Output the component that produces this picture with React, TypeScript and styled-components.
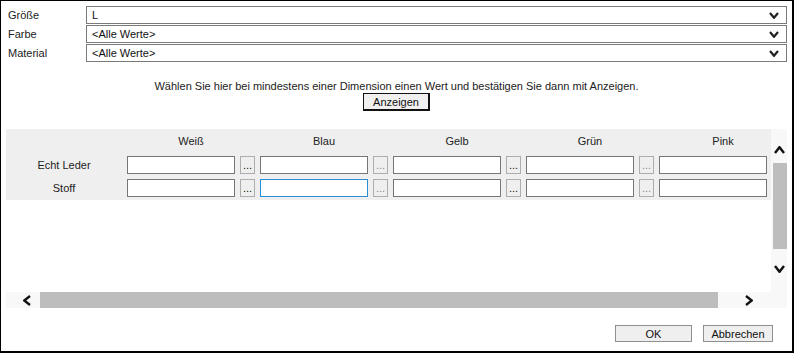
import React from "react";
import styled, { createGlobalStyle } from "styled-components";

const GlobalStyle = createGlobalStyle`
  html, body { margin: 0; padding: 0; background: #fff; }
  body { font-family: "Liberation Sans", Arial, sans-serif; font-size: 11px; color: #222; }
  * { box-sizing: border-box; }
`;

const Frame = styled.div`
  width: 794px;
  height: 353px;
  border-style: solid;
  border-color: #000;
  border-width: 1px 2px 2px 1px;
  padding: 5px 5px 0 5px;
  display: flex;
  flex-direction: column;
  background: #fff;
`;

const FilterGrid = styled.div`
  display: grid;
  grid-template-columns: 80px 1fr;
  row-gap: 1px;
`;

const FilterLabel = styled.div`
  height: 18px;
  line-height: 18px;
  padding-left: 2px;
  color: #222;
`;

const SelectBox = styled.div`
  height: 18px;
  border: 1px solid #7a7a7a;
  display: flex;
  align-items: center;
  justify-content: space-between;
  padding: 0 7px 0 5px;
  background: #fff;
  color: #111;
`;

const Hint = styled.div`
  display: flex;
  flex-direction: column;
  align-items: center;
  margin-top: 18px;
`;

const HintText = styled.div`
  line-height: 13px;
  color: #222;
`;

const ShowButton = styled.button`
  height: 18px;
  padding: 0 9px;
  font-family: inherit;
  font-size: 11px;
  color: #111;
  background: #f0f0f0;
  border-style: solid;
  border-color: #111;
  border-width: 1px 2px 2px 1px;
`;

const ScrollArea = styled.div`
  margin-top: 18px;
  height: 179px;
  display: grid;
  grid-template-columns: 1fr 16px;
  grid-template-rows: 163px 16px;
`;

const Viewport = styled.div`
  overflow: hidden;
  background: #fff;
`;

const Table = styled.div`
  display: grid;
  grid-template-columns: 116px repeat(5, 133px);
  grid-template-rows: 24px 23px 23px;
  align-items: center;
  width: max-content;
  background: #efefef;
  padding-bottom: 1px;
`;

const ColHeader = styled.div`
  padding-left: 5px;
  width: 128px;
  box-sizing: content-box;
  text-align: center;
  color: #222;
`;

const RowLabel = styled.div`
  text-align: center;
  color: #222;
`;

const Cell = styled.div`
  display: flex;
  align-items: center;
  gap: 5px;
  padding-left: 5px;
`;

const ValueInput = styled.div<{ $focused?: boolean }>`
  width: 108px;
  height: 18px;
  background: #fff;
  border: 1px solid ${(p) => (p.$focused ? "#2a8fd6" : "#767676")};
`;

const DotsButton = styled.div<{ $muted?: boolean }>`
  width: 15px;
  height: 18px;
  border: 1px solid #adadad;
  background: #efefef;
  color: ${(p) => (p.$muted ? "#8a8a8a" : "#111")};
  font-size: 11px;
  display: flex;
  justify-content: center;
  align-items: flex-end;
  line-height: 13px;
  padding-bottom: 1px;
`;

const VBar = styled.div`
  background: #f8f8f8;
  display: flex;
  flex-direction: column;
`;

const ArrowBox = styled.div<{ $h?: number; $w?: number; $pt?: number; $pl?: number }>`
  display: flex;
  flex: ${(p) => (p.$h || p.$w ? "0 0 auto" : "1 1 auto")};
  ${(p) => (p.$h ? `height: ${p.$h}px;` : "")}
  ${(p) => (p.$w ? `width: ${p.$w}px;` : "")}
  padding-top: ${(p) => p.$pt ?? 0}px;
  padding-left: ${(p) => p.$pl ?? 0}px;
  justify-content: ${(p) => (p.$pl !== undefined ? "flex-start" : "center")};
  align-items: ${(p) => (p.$pt !== undefined ? "flex-start" : "center")};
`;

const VThumb = styled.div`
  height: 86px;
  margin-left: 2px;
  background: #bdbdbd;
`;

const HBar = styled.div`
  grid-column: 1 / -1;
  background: #f8f8f8;
  display: flex;
`;

const HThumb = styled.div`
  width: 678px;
  background: #bdbdbd;
`;

const Footer = styled.div`
  display: flex;
  justify-content: flex-end;
  gap: 11px;
  margin-top: 17px;
  padding-right: 14px;
`;

const DialogButton = styled.button<{ $width: number }>`
  width: ${(p) => p.$width}px;
  height: 17px;
  padding: 0;
  font-family: inherit;
  font-size: 11px;
  color: #111;
  background: #efefef;
  border: 1px solid #8f8f8f;
`;

type Dir = "up" | "down" | "left" | "right";

const Chevron: React.FC<{ dir: Dir; size?: number; color?: string; sw?: number }> = ({
  dir,
  size = 9,
  color = "#111",
  sw = 2.4,
}) => {
  const vertical = dir === "up" || dir === "down";
  const w = vertical ? size : Math.round(size * 0.7);
  const h = vertical ? Math.round(size * 0.7) : size;
  let d = "";
  if (dir === "down") d = `M1 1 L${w / 2} ${h - 1.2} L${w - 1} 1`;
  if (dir === "up") d = `M1 ${h - 1} L${w / 2} 1.2 L${w - 1} ${h - 1}`;
  if (dir === "left") d = `M${w - 1} 1 L1.2 ${h / 2} L${w - 1} ${h - 1}`;
  if (dir === "right") d = `M1 1 L${w - 1.2} ${h / 2} L1 ${h - 1}`;
  return (
    <svg width={w} height={h} viewBox={`0 0 ${w} ${h}`} style={{ display: "block" }}>
      <path d={d} fill="none" stroke={color} strokeWidth={sw} strokeLinecap="butt" strokeLinejoin="miter" />
    </svg>
  );
};

const filters = [
  { label: "Größe", value: "L" },
  { label: "Farbe", value: "<Alle Werte>" },
  { label: "Material", value: "<Alle Werte>" },
];

const colors = ["Weiß", "Blau", "Gelb", "Grün", "Pink"];
const materials = ["Echt Leder", "Stoff"];

export default function App() {
  return (
    <>
      <GlobalStyle />
      <Frame>
        <FilterGrid>
          {filters.map((f) => (
            <React.Fragment key={f.label}>
              <FilterLabel>{f.label}</FilterLabel>
              <SelectBox>
                <span>{f.value}</span>
                <Chevron dir="down" size={10} color="#222" sw={2.2} />
              </SelectBox>
            </React.Fragment>
          ))}
        </FilterGrid>

        <Hint>
          <HintText>
            Wählen Sie hier bei mindestens einer Dimension einen Wert und bestätigen Sie dann mit Anzeigen.
          </HintText>
          <ShowButton>Anzeigen</ShowButton>
        </Hint>

        <ScrollArea>
          <Viewport>
            <Table>
              <div />
              {colors.map((c) => (
                <ColHeader key={c}>{c}</ColHeader>
              ))}
              {materials.map((m, ri) => (
                <React.Fragment key={m}>
                  <RowLabel>{m}</RowLabel>
                  {colors.map((c, ci) => (
                    <Cell key={c}>
                      <ValueInput $focused={ri === 1 && ci === 1} />
                      {ci < colors.length - 1 && <DotsButton $muted={ci % 2 === 1}>...</DotsButton>}
                    </Cell>
                  ))}
                </React.Fragment>
              ))}
            </Table>
          </Viewport>
          <VBar>
            <ArrowBox $h={34} $pt={17}>
              <Chevron dir="up" size={11} />
            </ArrowBox>
            <VThumb />
            <ArrowBox $pt={16}>
              <Chevron dir="down" size={11} />
            </ArrowBox>
          </VBar>
          <HBar>
            <ArrowBox $w={34} $pl={17}>
              <Chevron dir="left" size={11} />
            </ArrowBox>
            <HThumb />
            <ArrowBox $pl={27}>
              <Chevron dir="right" size={11} />
            </ArrowBox>
          </HBar>
        </ScrollArea>

        <Footer>
          <DialogButton $width={77}>OK</DialogButton>
          <DialogButton $width={70}>Abbrechen</DialogButton>
        </Footer>
      </Frame>
    </>
  );
}
